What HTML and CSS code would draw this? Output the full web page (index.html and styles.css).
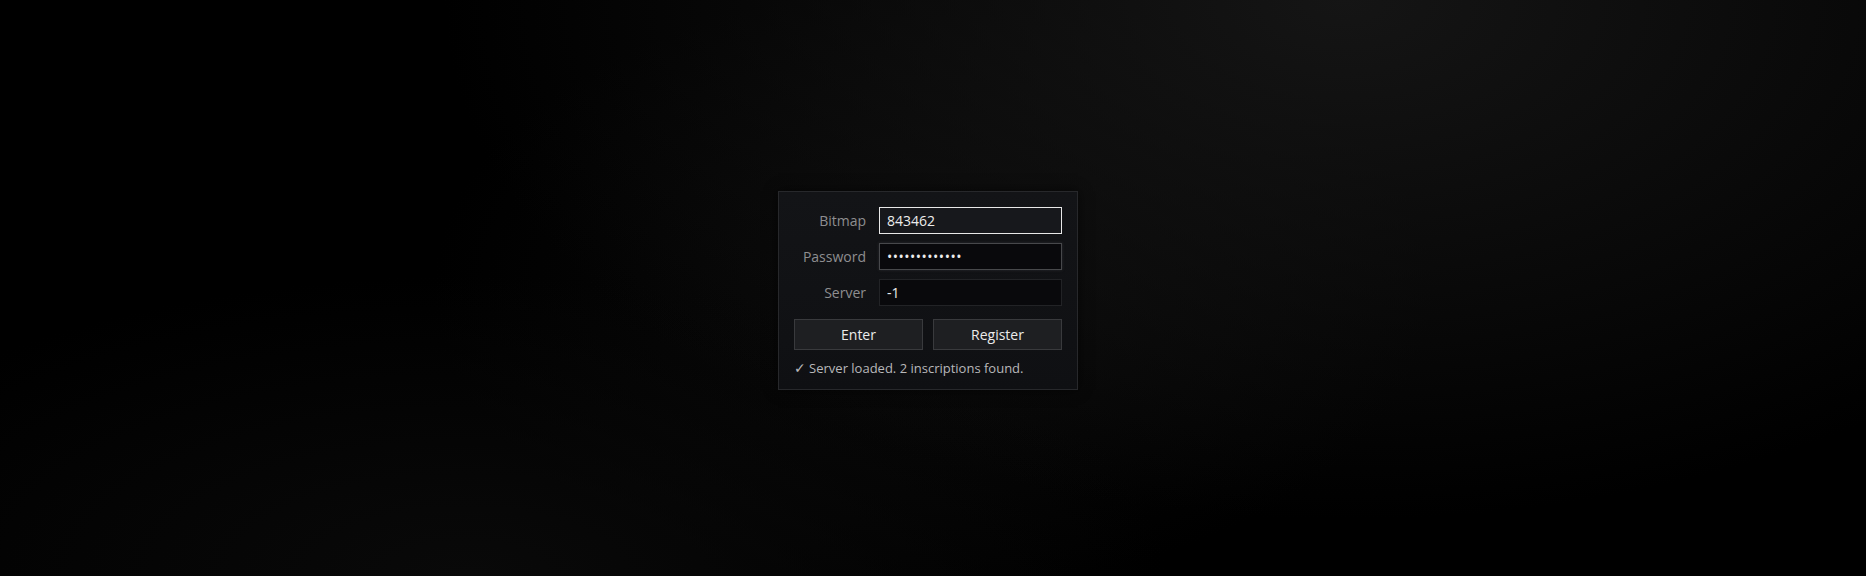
FILE: index.html
```html
<!DOCTYPE html>
<html lang="en">
<head>
<meta charset="utf-8">
<title>Login</title>
<link rel="stylesheet" href="styles.css">
</head>
<body>
<main class="stage">
  <form class="panel" onsubmit="return false">
    <div class="fields">
      <label class="label" for="bitmap">Bitmap</label>
      <input class="field field-focus" id="bitmap" type="text" value="843462">
      <label class="label" for="password">Password</label>
      <input class="field field-hover" id="password" type="password" value="abcdefghijklm">
      <label class="label" for="server">Server</label>
      <input class="field" id="server" type="text" value="-1">
    </div>
    <div class="actions">
      <button class="btn" type="button">Enter</button>
      <button class="btn" type="button">Register</button>
    </div>
    <p class="status"><span class="check">✓</span> Server loaded. 2 inscriptions found.</p>
  </form>
</main>
</body>
</html>
```
FILE: styles.css
```css
* { box-sizing: border-box; }
html, body {
  margin: 0;
  height: 100%;
}
body {
  font-family: "Open Sans", "Noto Sans", sans-serif;
  background-color: #000;
  background-image:
    radial-gradient(ellipse 900px 520px at 72% 0%, rgba(22,22,22,0.95), rgba(0,0,0,0) 100%),
    radial-gradient(ellipse 700px 300px at 25% 100%, rgba(10,10,10,0.9), rgba(0,0,0,0) 100%),
    radial-gradient(ellipse 500px 300px at 50% 50%, rgba(12,12,12,0.8), rgba(0,0,0,0) 100%);
}
.stage {
  height: 576px;
  display: flex;
  justify-content: center;
  padding-top: 191px;
  padding-right: 10px;
}
.panel {
  width: 300px;
  height: 199px;
  align-self: flex-start;
  background: linear-gradient(180deg, #131417 0%, #0f1013 100%);
  border: 1px solid #27282b;
  padding: 15px 15px 0 15px;
  box-shadow: 0 0 12px rgba(0,0,0,0.6);
  margin: 0;
}
.fields {
  display: grid;
  grid-template-columns: 72px 1fr;
  column-gap: 13px;
  row-gap: 9px;
  align-items: center;
}
.label {
  text-align: right;
  color: #8e8e90;
  font-size: 14px;
  line-height: 18px;
}
.field {
  height: 27px;
  width: 100%;
  padding: 0 7px;
  font-family: "Open Sans", "Noto Sans", sans-serif;
  font-size: 14px;
  color: #ececec;
  background: #09090c;
  border: 1px solid #222326;
  outline: none;
  margin: 0;
}
.field-focus {
  background: #17181c;
  border-color: #e8e8e8;
}
.field-hover {
  border-color: #47484b;
  box-shadow: 0 0 3px rgba(90,90,95,0.35);
  letter-spacing: 0.5px;
}
.actions {
  margin-top: 13px;
  display: grid;
  grid-template-columns: 1fr 1fr;
  column-gap: 10px;
}
.btn {
  height: 31px;
  background: #1e1f22;
  border: 1px solid #393a3d;
  color: #ececec;
  font-family: "Open Sans", "Noto Sans", sans-serif;
  font-size: 14px;
  padding: 0;
  margin: 0;
}
.status {
  margin: 9px 0 0 0;
  color: #b8b8ba;
  font-size: 13px;
  line-height: 18px;
}
.check {
  font-family: "DejaVu Sans", sans-serif;
  font-size: 14px;
  line-height: 18px;
}
```
